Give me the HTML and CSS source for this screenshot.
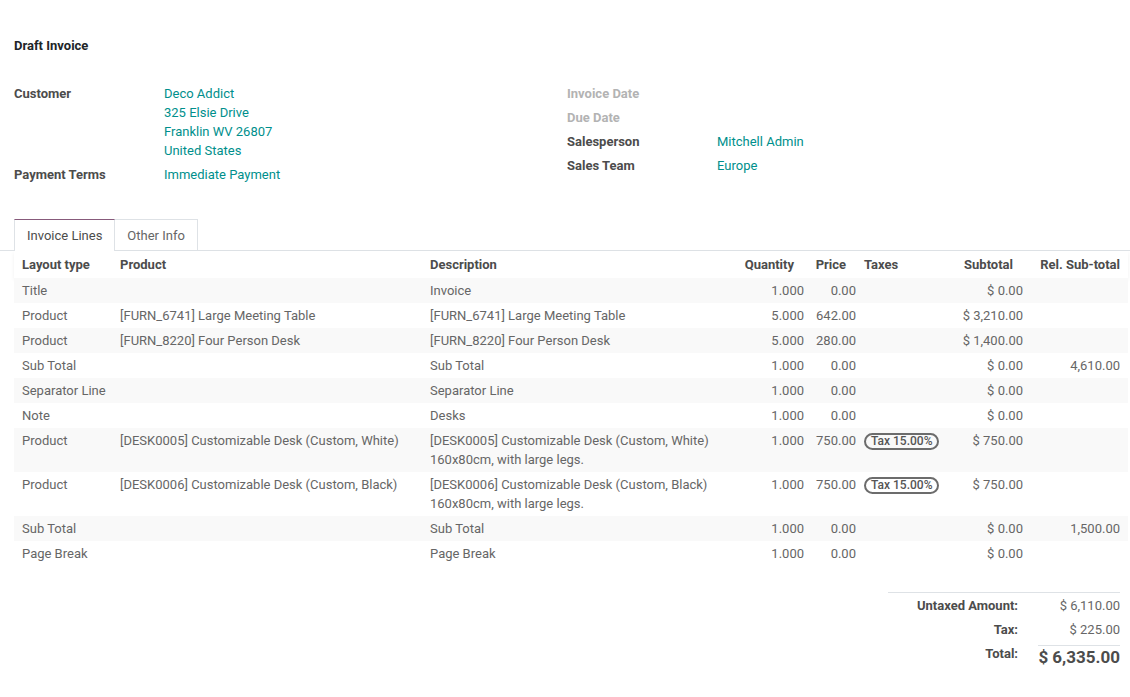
FILE: index.html
```html
<!DOCTYPE html>
<html>
<head>
<meta charset="utf-8">
<link rel="stylesheet" href="styles.css">
</head>
<body>
<div class="sheet">
  <h1 class="title">Draft Invoice</h1>
  <div class="groups">
    <div class="group">
      <div class="frow">
        <div class="flabel">Customer</div>
        <div class="fval link">Deco Addict<br>325 Elsie Drive<br>Franklin WV 26807<br>United States</div>
      </div>
      <div class="frow">
        <div class="flabel">Payment Terms</div>
        <div class="fval link">Immediate Payment</div>
      </div>
    </div>
    <div class="group">
      <div class="frow">
        <div class="flabel empty">Invoice Date</div>
        <div class="fval"></div>
      </div>
      <div class="frow">
        <div class="flabel empty">Due Date</div>
        <div class="fval"></div>
      </div>
      <div class="frow">
        <div class="flabel">Salesperson</div>
        <div class="fval link">Mitchell Admin</div>
      </div>
      <div class="frow">
        <div class="flabel">Sales Team</div>
        <div class="fval link">Europe</div>
      </div>
    </div>
  </div>
</div>

<div class="tabs">
  <div class="tab active">Invoice Lines</div>
  <div class="tab">Other Info</div>
</div>

<div class="tablewrap">
<table class="lines">
  <colgroup>
    <col class="c-type"><col class="c-prod"><col class="c-desc"><col class="c-qty"><col class="c-price"><col class="c-tax"><col class="c-sub"><col class="c-rel">
  </colgroup>
  <thead>
    <tr>
      <th>Layout type</th>
      <th>Product</th>
      <th>Description</th>
      <th class="num h-qty">Quantity</th>
      <th class="num h-price">Price</th>
      <th class="taxes">Taxes</th>
      <th class="num h-sub">Subtotal</th>
      <th class="num h-rel">Rel. Sub-total</th>
    </tr>
  </thead>
  <tbody>
    <tr><td>Title</td><td></td><td>Invoice</td><td class="num">1.000</td><td class="num price">0.00</td><td class="taxes"></td><td class="num">$ 0.00</td><td class="num"></td></tr>
    <tr><td>Product</td><td>[FURN_6741] Large Meeting Table</td><td>[FURN_6741] Large Meeting Table</td><td class="num">5.000</td><td class="num price">642.00</td><td class="taxes"></td><td class="num">$ 3,210.00</td><td class="num"></td></tr>
    <tr><td>Product</td><td>[FURN_8220] Four Person Desk</td><td>[FURN_8220] Four Person Desk</td><td class="num">5.000</td><td class="num price">280.00</td><td class="taxes"></td><td class="num">$ 1,400.00</td><td class="num"></td></tr>
    <tr><td>Sub Total</td><td></td><td>Sub Total</td><td class="num">1.000</td><td class="num price">0.00</td><td class="taxes"></td><td class="num">$ 0.00</td><td class="num">4,610.00</td></tr>
    <tr><td>Separator Line</td><td></td><td>Separator Line</td><td class="num">1.000</td><td class="num price">0.00</td><td class="taxes"></td><td class="num">$ 0.00</td><td class="num"></td></tr>
    <tr><td>Note</td><td></td><td>Desks</td><td class="num">1.000</td><td class="num price">0.00</td><td class="taxes"></td><td class="num">$ 0.00</td><td class="num"></td></tr>
    <tr><td>Product</td><td>[DESK0005] Customizable Desk (Custom, White)</td><td>[DESK0005] Customizable Desk (Custom, White)<br>160x80cm, with large legs.</td><td class="num">1.000</td><td class="num price">750.00</td><td class="taxes"><span class="badge">Tax 15.00%</span></td><td class="num">$ 750.00</td><td class="num"></td></tr>
    <tr><td>Product</td><td>[DESK0006] Customizable Desk (Custom, Black)</td><td>[DESK0006] Customizable Desk (Custom, Black)<br>160x80cm, with large legs.</td><td class="num">1.000</td><td class="num price">750.00</td><td class="taxes"><span class="badge">Tax 15.00%</span></td><td class="num">$ 750.00</td><td class="num"></td></tr>
    <tr><td>Sub Total</td><td></td><td>Sub Total</td><td class="num">1.000</td><td class="num price">0.00</td><td class="taxes"></td><td class="num">$ 0.00</td><td class="num">1,500.00</td></tr>
    <tr><td>Page Break</td><td></td><td>Page Break</td><td class="num">1.000</td><td class="num price">0.00</td><td class="taxes"></td><td class="num">$ 0.00</td><td class="num"></td></tr>
  </tbody>
</table>
</div>

<div class="totals-wrap">
  <div class="totals">
    <div class="trow">
      <div class="tlabel">Untaxed Amount:</div>
      <div class="tval">$ 6,110.00</div>
    </div>
    <div class="trow">
      <div class="tlabel">Tax:</div>
      <div class="tval">$ 225.00</div>
    </div>
    <div class="trow last">
      <div class="tlabel">Total:</div>
      <div class="tval grand">$ 6,335.00</div>
    </div>
  </div>
</div>
</body>
</html>
```

FILE: styles.css
```css
html, body {
  margin: 0;
  padding: 0;
  background: #ffffff;
}
body {
  font-family: Roboto, "Liberation Sans", sans-serif;
  font-size: 13px;
  line-height: 19px;
  color: #666666;
}
.sheet {
  padding: 36px 10px 0 14px;
}
.title {
  margin: 0;
  font-size: 13px;
  line-height: 19px;
  font-weight: 700;
  color: #212529;
}
.groups {
  display: flex;
  margin-top: 29px;
}
.group {
  display: flex;
  flex-direction: column;
  gap: 5px;
}
.group:first-child {
  width: 553px;
}
.group:last-child {
  flex: 1;
}
.frow {
  display: flex;
  min-height: 19px;
}
.flabel {
  width: 150px;
  flex: none;
  font-weight: 700;
  color: #4c4c4c;
}
.flabel.empty {
  color: #b3b3b3;
}
.fval {
  flex: 1;
}
.link {
  color: #008f8c;
}
.tabs {
  display: flex;
  margin-top: 35px;
  padding-left: 14px;
  border-bottom: 1px solid #dee2e6;
}
.tab {
  padding: 6px 12px 5px 12px;
  border: 1px solid #dee2e6;
  border-bottom: none;
  margin-bottom: -1px;
  background: #fff;
  color: #666666;
  height: 19px;
}
.tab + .tab {
  border-left: none;
}
.tab.active {
  color: #4c4c4c;
  border-top-color: #875a7b;
  height: 20px;
}
.tablewrap {
  padding: 0 2px 0 14px;
}
.lines {
  width: 1114px;
  table-layout: fixed;
  border-collapse: collapse;
}
.c-type { width: 98px; }
.c-prod { width: 310px; }
.c-desc { width: 308px; }
.c-qty { width: 82px; }
.c-price { width: 48px; }
.c-tax { width: 80px; }
.c-sub { width: 91px; }
.c-rel { width: 97px; }
.lines th {
  height: 27px;
  padding: 0 8px;
  text-align: left;
  font-weight: 700;
  color: #4c4c4c;
  white-space: nowrap;
  vertical-align: middle;
}
.lines thead tr {
  box-shadow: 0 2px 4px rgba(0, 0, 0, 0.06);
}
.lines td {
  padding: 3px 8px;
  vertical-align: top;
  white-space: nowrap;
  color: #666666;
}
.lines tbody tr:nth-child(odd) {
  background: #f9f9f9;
}
.lines .num {
  text-align: right;
}
.lines th.h-qty { padding-left: 0; padding-right: 18px; }
.lines th.h-price { padding-left: 0; padding-right: 14px; }
.lines th.h-sub { padding-left: 0; padding-right: 18px; }
.lines th.h-rel { padding-left: 0; }
.lines .price { padding-left: 0; padding-right: 4px; }
.lines .taxes { padding-left: 4px; padding-right: 4px; }
.badge {
  display: inline-block;
  border: 2px solid #6c6c6c;
  border-radius: 9px;
  padding: 0 5px;
  font-size: 12px;
  line-height: 13px;
  font-weight: 500;
  color: #555555;
}
.totals-wrap {
  display: flex;
  justify-content: flex-end;
  padding: 26px 10px 0 0;
}
.totals {
  width: 232px;
  border-top: 1px solid #dee2e6;
  padding-top: 0;
}
.trow {
  display: flex;
  align-items: flex-start;
  height: 24px;
  padding-top: 3px;
  box-sizing: border-box;
}
.trow.last {
  height: auto;
  padding-top: 0;
  margin-top: 4px;
}
.tlabel {
  width: 130px;
  text-align: right;
  font-weight: 700;
  color: #4c4c4c;
}
.trow.last .tlabel {
  line-height: 17px;
}
.tval {
  flex: 1;
  text-align: right;
}
.trow.last .tval {
  border-top: 1px solid #dee2e6;
  margin-left: 20px;
  padding-top: 0;
}
.grand {
  font-size: 17px;
  font-weight: 700;
  color: #4c4c4c;
  line-height: 22px;
}
```
